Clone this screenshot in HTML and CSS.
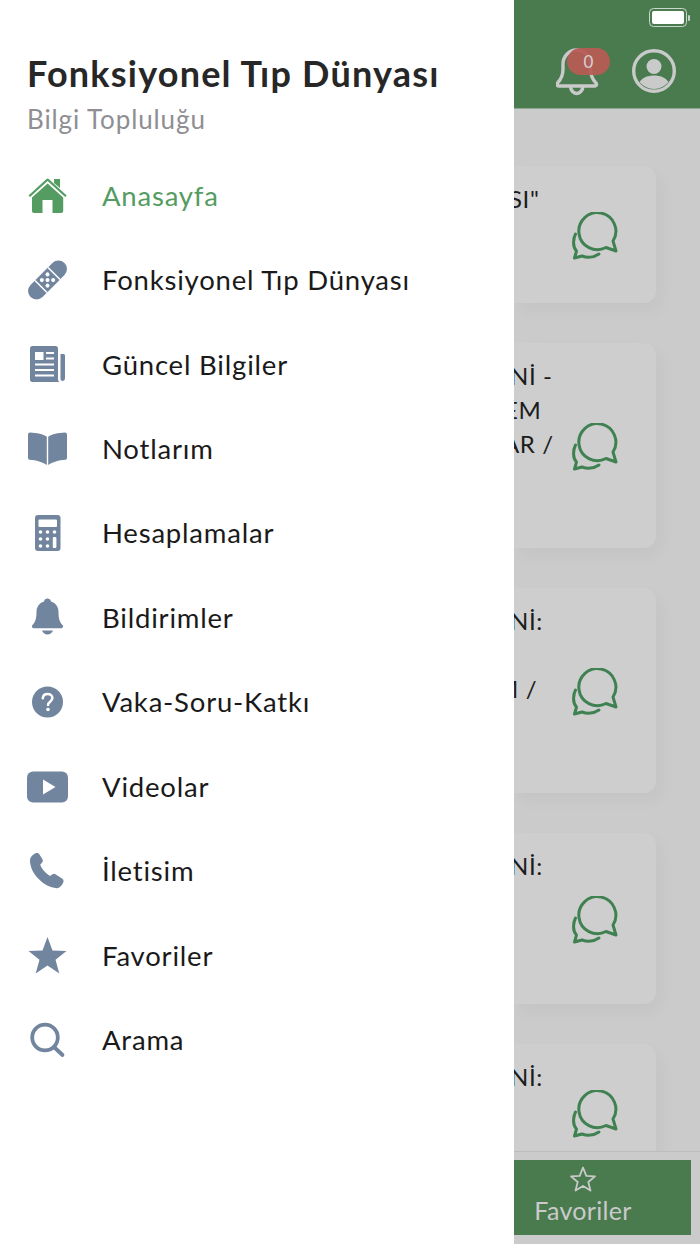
FILE: index.html
```html
<!DOCTYPE html>
<html lang="tr">
<head>
<meta charset="utf-8">
<title>Fonksiyonel Tıp Dünyası</title>
<link rel="stylesheet" href="styles.css">
</head>
<body>
<div class="app">
  <aside class="drawer">
    <div class="brand">
      <div class="brand-title">Fonksiyonel Tıp Dünyası</div>
      <div class="brand-sub">Bilgi Topluluğu</div>
    </div>
    <nav class="menu">
      <div class="item active">
        <svg class="ico" viewBox="0 0 42 40"><path class="green" d="M27 4h6v9l-6-5z"/><path class="green" d="M1.500 20.500 19.500 4a1.600 1.600 0 0 1 2.200 0l18 16.500-1.500 1.500-17.600-16-17.600 16z"/><path class="green" d="M5 22.500 20.600 8.500l15.600 14V36a2 2 0 0 1-2 2H25.500V25h-10v13H7a2 2 0 0 1-2-2z"/></svg>
        <span>Anasayfa</span>
      </div>
      <div class="item">
        <svg class="ico" viewBox="0 0 42 40"><g transform="rotate(-45 20.500 20)"><rect class="fill" x="-3.500" y="11.500" width="48" height="17" rx="8.500"/><rect x="10.500" y="11.500" width="20" height="17" fill="#fff"/><rect class="fill" x="12" y="11.500" width="17" height="17"/><circle cx="16.500" cy="16" r="2" fill="#fff"/><circle cx="24.500" cy="16" r="2" fill="#fff"/><circle cx="16.500" cy="24" r="2" fill="#fff"/><circle cx="24.500" cy="24" r="2" fill="#fff"/><circle cx="20.500" cy="20" r="2" fill="#fff"/></g></svg>
        <span>Fonksiyonel Tıp Dünyası</span>
      </div>
      <div class="item">
        <svg class="ico" viewBox="0 0 42 40"><path class="fill" d="M3 4.500a2.500 2.500 0 0 1 2.500-2.500h23a2.500 2.500 0 0 1 2.500 2.500V35a3 3 0 0 0 1.500 3H5.500A2.500 2.500 0 0 1 3 35.500z"/><path class="fill" d="M33.500 10H37a2 2 0 0 1 1 2v22a3 3 0 0 1-3 3 2 2 0 0 1-1.500-2z"/><path d="M8 8h8.500v8H8zM19 8h8v2h-8zM19 13.500h8v2h-8zM8 19.500h19v2H8zM8 25h19v2H8zM8 30.500h19v2H8z" fill="#fff"/></svg>
        <span>Güncel Bilgiler</span>
      </div>
      <div class="item">
        <svg class="ico" viewBox="0 0 42 40"><path class="fill" d="M1 5.500A2 2 0 0 1 3 3.500c7 .3 13 1.500 16.800 4.300V36c-4-3-10.500-4.800-17.300-5.300A1.700 1.700 0 0 1 1 29z"/><path class="fill" d="M40 5.500a2 2 0 0 0-2-2c-7 .3-13 1.500-16.800 4.300V36c4-3 10.500-4.800 17.300-5.300A1.700 1.700 0 0 0 40 29z"/></svg>
        <span>Notlarım</span>
      </div>
      <div class="item">
        <svg class="ico" viewBox="0 0 42 40"><rect class="fill" x="8" y="2" width="25.500" height="36" rx="3"/><rect x="11.500" y="6.500" width="18.500" height="7.500" rx="1" fill="#fff"/><g fill="#fff"><circle cx="13.500" cy="19" r="1.800"/><circle cx="20.500" cy="19" r="1.800"/><circle cx="27.500" cy="19" r="1.800"/><circle cx="13.500" cy="26" r="1.800"/><circle cx="20.500" cy="26" r="1.800"/><circle cx="13.500" cy="33" r="1.800"/><circle cx="20.500" cy="33" r="1.800"/><rect x="25.800" y="24" width="3.600" height="11" rx="1"/></g></svg>
        <span>Hesaplamalar</span>
      </div>
      <div class="item">
        <svg class="ico" viewBox="0 0 42 40"><path class="fill" d="M20.500 1.500c1.800 0 3.200 1.300 3.500 3 5 1.500 7.500 5.500 7.500 10.500 0 6 1 10 4.200 13.300.9 1 .4 2.900-1.400 2.900H6.700c-1.800 0-2.300-1.900-1.400-2.900C8.500 25 9.500 21 9.500 15c0-5 2.500-9 7.500-10.500.3-1.700 1.700-3 3.500-3z"/><path class="fill" d="M15 33.500h11c-.6 2.300-2.900 4-5.500 4S15.600 35.800 15 33.500z"/></svg>
        <span>Bildirimler</span>
      </div>
      <div class="item">
        <svg class="ico" viewBox="0 0 42 40"><circle class="fill" cx="20.500" cy="20" r="15.500"/><path d="M15.800 16.300c.2-2.700 2.200-4.300 4.800-4.300 2.800 0 4.800 1.700 4.800 4.100 0 3.600-4.400 3.700-4.400 6.900" fill="none" stroke="#fff" stroke-width="2.500" stroke-linecap="round"/><circle cx="21" cy="27.500" r="1.800" fill="#fff"/></svg>
        <span>Vaka-Soru-Katkı</span>
      </div>
      <div class="item">
        <svg class="ico" viewBox="0 0 42 40"><rect class="fill" x="0" y="5.500" width="41" height="31" rx="6"/><path d="M16 13.500l12.500 7.500L16 28.500z" fill="#fff"/></svg>
        <span>Videolar</span>
      </div>
      <div class="item">
        <svg class="ico" viewBox="0 0 42 40"><path class="fill" d="M8.500 2.300c1.500-.7 3-.3 3.800.9l3 4.800c.8 1.300.6 2.700-.4 3.800l-1.700 1.900c1.600 4.500 5.300 8.700 9.900 11.200l2-1.400c1.200-.8 2.500-.9 3.700 0l6.200 3.900c1.500 1 2 2.700 1.200 4.200-1.200 2.600-3.700 6-6.700 5.700-6.200-.6-12.300-3.400-17.800-9.200C6.300 22.700 3 16 3 9.300 3 6.300 6 3.500 8.500 2.300z"/></svg>
        <span>İletisim</span>
      </div>
      <div class="item">
        <svg class="ico" viewBox="0 0 42 40"><path class="fill" stroke-linejoin="round" d="M20.500 2l5 13.500 14 .5-11 8.800 3.800 13.700-11.800-8-11.800 8 3.800-13.700L1.500 16l14-.5z"/></svg>
        <span>Favoriler</span>
      </div>
      <div class="item">
        <svg class="ico" viewBox="0 0 42 40"><circle class="line-ico" cx="18" cy="17.500" r="12.800"/><path class="line-ico" d="M27.500 27.500l8 7.500"/></svg>
        <span>Arama</span>
      </div>
    </nav>
  </aside>

  <main class="behind">
    <header class="topbar">
      <div class="status">
        <svg class="battery" viewBox="0 0 42 20"><rect x=".5" y=".5" width="37" height="18" rx="4" fill="none" stroke="#c9d6cb" stroke-width="1"/><rect x="3" y="3" width="32" height="13" rx="2" fill="#fff"/><rect x="39" y="7" width="2" height="6" rx="1" fill="#c9d6cb"/></svg>
      </div>
      <div class="actions">
        <div class="bell-wrap">
          <svg class="bell" viewBox="0 0 44 48"><path d="M14.500 38c0 4.500 3 7.500 6.200 7.500s6.200-3 6.200-7.500" fill="none" stroke="#cacaca" stroke-width="3.400"/><path d="M3 38h36c1.500 0 2-1.500 1-3-4-4-5.500-8-5.500-14V16C34.500 8 28 2 20.700 2S7 8 7 16v5c0 6-1.500 10-5.500 14-1 1.500-.5 3 1.500 3z" fill="none" stroke="#cacaca" stroke-width="3.400" stroke-linejoin="round"/></svg>
          <span class="badge">0</span>
        </div>
        <svg class="avatar" viewBox="0 0 44 44"><circle cx="22" cy="22" r="20.300" fill="none" stroke="#cacaca" stroke-width="3.400"/><circle cx="22" cy="17.500" r="7.500" fill="#cacaca"/><path d="M7.500 33c3-4.500 8.500-6.500 14.500-6.500S33.500 28.500 36.500 33C33 37 28 40 22 40S11 37 7.500 33z" fill="#cacaca"/></svg>
      </div>
    </header>
    <section class="feed">
      <article class="card h-a">
        <div class="lines"><div class="line off-a">SI"</div></div>
        <svg class="chat" viewBox="0 0 48 48"><use href="#chat-shape"/></svg>
      </article>
      <article class="card h-b">
        <div class="lines"><div class="line off-b">Nİ -</div><div class="line off-c">EM</div><div class="line off-d">AR /</div></div>
        <svg class="chat" viewBox="0 0 48 48"><use href="#chat-shape"/></svg>
      </article>
      <article class="card h-b">
        <div class="lines"><div class="line off-b">Nİ:</div><div class="line">&nbsp;</div><div class="line off-e">M /</div></div>
        <svg class="chat" viewBox="0 0 48 48"><use href="#chat-shape"/></svg>
      </article>
      <article class="card h-c">
        <div class="lines"><div class="line off-b">Nİ:</div></div>
        <svg class="chat" viewBox="0 0 48 48"><use href="#chat-shape"/></svg>
      </article>
      <article class="card h-a">
        <div class="lines"><div class="line off-b">Nİ:</div></div>
        <svg class="chat" viewBox="0 0 48 48"><use href="#chat-shape"/></svg>
      </article>
    </section>
    <footer class="tabbar">
      <div class="tab">
        <svg class="tab-star" viewBox="0 0 28 28"><path d="M14 2.500l3.300 8.300 8.700.6-6.700 5.600 2.200 8.600L14 20.900l-7.500 4.700 2.200-8.600L2 11.400l8.700-.6z" fill="none" stroke="#cacaca" stroke-width="1.800" stroke-linejoin="round"/></svg>
        <span class="tab-label">Favoriler</span>
      </div>
    </footer>
  </main>
</div>
<svg class="defs" aria-hidden="true"><defs><g id="chat-shape" fill="none" stroke="#3f8151" stroke-width="3" stroke-linecap="round" stroke-linejoin="round"><path d="M41 29A18.500 18.500 0 1 0 34 35.500L44 39z"/><path d="M3.500 22C1 27 .5 35 4.500 39L2.500 46 10 44C15 46 21 46 27 42"/></g></defs></svg>
</body>
</html>
```

FILE: styles.css
```css
* { box-sizing: border-box; }
html, body { margin: 0; padding: 0; }
body {
  width: 700px;
  height: 1244px;
  overflow: hidden;
  background: #cbcbcb;
  font-family: "Lato", "Noto Sans", sans-serif;
}
.defs { width: 0; height: 0; display: block; }
.app { display: flex; width: 700px; height: 1244px; }

.drawer {
  flex: 0 0 514px;
  background: #fff;
  padding-top: 50px;
}
.brand { padding-left: 27px; }
.brand-title {
  font-size: 36px;
  line-height: 46px;
  font-weight: 700;
  letter-spacing: 1.2px;
  color: #272727;
  white-space: nowrap;
}
.brand-sub {
  font-size: 26px;
  line-height: 34px;
  margin-top: 6px;
  color: #8e8e93;
  letter-spacing: .9px;
}
.menu { margin-top: 17px; }
.item {
  height: 84.45px;
  display: flex;
  align-items: center;
  padding-left: 27px;
  font-size: 27.5px;
  color: #1a1a1a;
  letter-spacing: .8px;
  white-space: nowrap;
}
.item.active { color: #549c62; }
.ico { width: 42px; height: 40px; margin-right: 33px; flex: none; }
.fill { fill: #72859e; }
.green { fill: #549c62; }
.line-ico { fill: none; stroke: #72859e; stroke-width: 3.800; stroke-linecap: round; }

.behind {
  flex: 1;
  min-width: 0;
  display: flex;
  flex-direction: column;
  overflow: hidden;
}
.topbar {
  height: 109px;
  flex: none;
  background: #497b4f;
  border-bottom: 1px solid #8fa892;
}
.status { height: 44px; display: flex; justify-content: flex-end; padding: 8px 9px 0 0; }
.battery { width: 42px; height: 20px; }
.actions { display: flex; justify-content: flex-end; align-items: flex-start; padding-right: 24px; }
.bell-wrap { position: relative; width: 44px; height: 48px; margin: 4px 32px 0 0; }
.bell { width: 44px; height: 48px; display: block; }
.badge {
  position: absolute;
  left: 11px;
  top: 0;
  width: 43px;
  height: 27px;
  border-radius: 14px;
  background: rgba(184, 90, 85, .93);
  color: #d3d3d3;
  font-size: 17px;
  line-height: 27px;
  text-align: center;
}
.avatar { width: 44px; height: 44px; margin-top: 5px; }

.feed {
  flex: 1;
  min-height: 0;
  overflow: hidden;
  padding-top: 57px;
  display: flex;
  flex-direction: column;
  gap: 40px;
}
.card {
  flex: none;
  width: 142px;
  background: #cecece;
  border-radius: 0 12px 12px 0;
  box-shadow: 6px 8px 16px rgba(0, 0, 0, .035);
  display: flex;
  align-items: center;
  position: relative;
}
.h-a { height: 137px; }
.h-b { height: 205px; }
.h-c { height: 171px; }
.lines {
  position: absolute;
  left: 0;
  top: 16px;
  width: 56px;
  overflow: hidden;
  font-size: 24px;
  line-height: 34px;
  letter-spacing: .6px;
  color: #1c1c1c;
  white-space: nowrap;
}
.line { height: 34px; }
.off-a { margin-left: -5px; }
.off-b { margin-left: -4px; }
.off-c { margin-left: -10px; }
.off-d { margin-left: -11px; }
.off-e { margin-left: -18px; }
.chat { width: 48px; height: 48px; margin-left: 58px; margin-top: 3px; }

.tabbar {
  flex: none;
  height: 93px;
  border-top: 1px solid #bdbdbd;
  padding: 8px 9px 9px 0;
}
.tab {
  height: 75px;
  margin-left: -39px;
  background: #497b4f;
  display: flex;
  flex-direction: column;
  align-items: center;
  color: #cacaca;
  padding-top: 5px;
}
.tab-star { width: 28px; height: 28px; display: block; }
.tab-label { font-size: 25px; line-height: 32px; margin-top: 1px; letter-spacing: .3px; }
```
